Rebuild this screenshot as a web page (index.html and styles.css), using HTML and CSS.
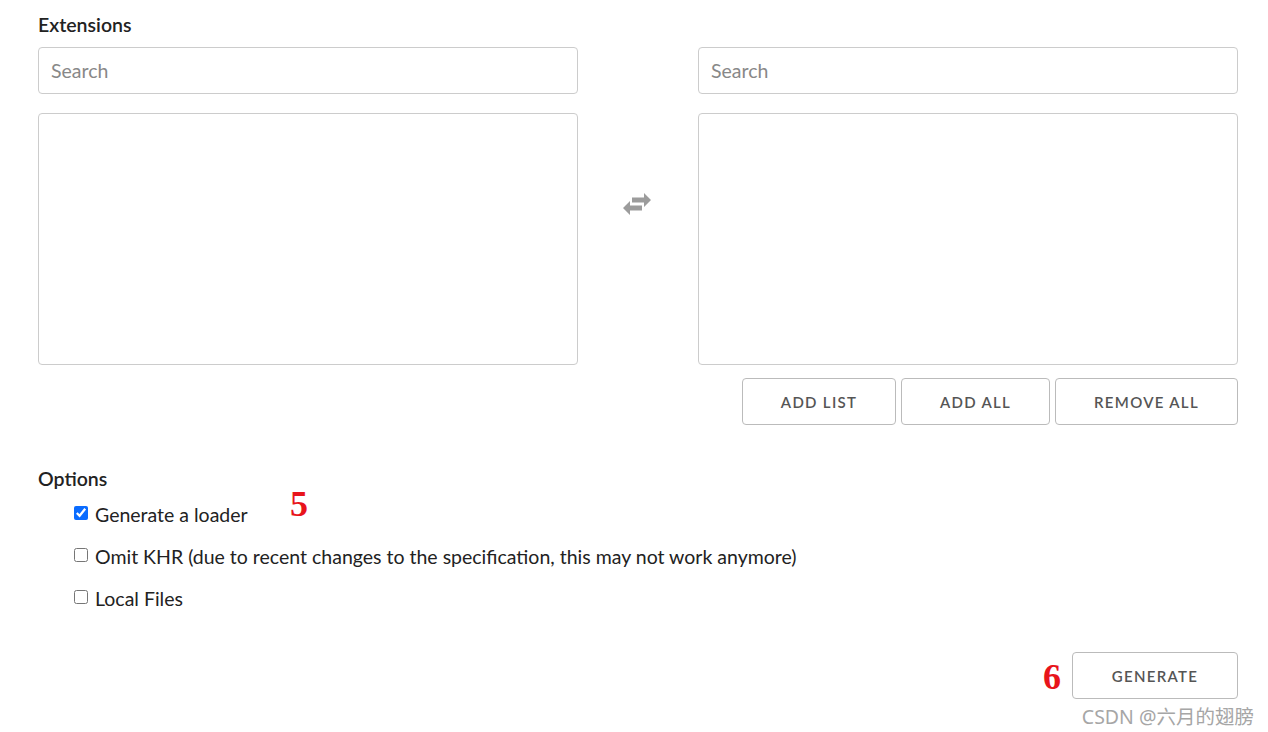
FILE: index.html
```html
<!DOCTYPE html>
<html lang="en">
<head>
    <meta charset="UTF-8">
    <title>Extensions</title>
    <link rel="stylesheet" href="styles.css">
</head>
<body>
    <div class="container">
        <h3 class="section-title">Extensions</h3>
        <div class="picker">
            <div class="column">
                <input type="text" class="search" placeholder="Search">
                <div class="list-box"></div>
            </div>
            <div class="swap">
                <svg width="28" height="22" viewBox="0 0 28 22">
                    <path d="M9 4.5h12V0l7 7-7 7V9.5H9z" fill="#9c9c9c"/>
                    <path d="M19 12.5H7V8l-7 7 7 7v-4.5h12z" fill="#9c9c9c"/>
                </svg>
            </div>
            <div class="column">
                <input type="text" class="search" placeholder="Search">
                <div class="list-box"></div>
                <div class="list-actions">
                    <button class="btn btn-list">ADD LIST</button>
                    <button class="btn btn-all">ADD ALL</button>
                    <button class="btn btn-remove">REMOVE ALL</button>
                </div>
            </div>
        </div>

        <h3 class="section-title options-title">Options</h3>
        <div class="options">
            <label class="option">
                <input type="checkbox" checked>
                <span>Generate a loader</span>
                <span class="mark mark-5">5</span>
            </label>
            <label class="option">
                <input type="checkbox">
                <span>Omit KHR (due to recent changes to the specification, this may not work anymore)</span>
            </label>
            <label class="option">
                <input type="checkbox">
                <span>Local Files</span>
            </label>
        </div>

        <div class="footer">
            <span class="mark mark-6">6</span>
            <button class="btn btn-generate">GENERATE</button>
        </div>
    </div>
    <div class="watermark">CSDN @六月的翅膀</div>
</body>
</html>
```

FILE: styles.css
```css
* {
    margin: 0;
    padding: 0;
    box-sizing: border-box;
}

body {
    background: #fff;
    color: #222;
    font-family: 'Lato', 'Open Sans', sans-serif;
    padding: 13px 0 0 38px;
    position: relative;
    height: 732px;
    overflow: hidden;
}

.container {
    width: 1200px;
}

.section-title {
    font-size: 19.5px;
    font-weight: 600;
    color: #222;
    line-height: 24px;
    margin-bottom: 10px;
}

.picker {
    display: grid;
    grid-template-columns: 540px 120px 540px;
}

.column {
    display: flex;
    flex-direction: column;
}

.search {
    height: 47px;
    border: 1px solid #ccc;
    border-radius: 4px;
    padding: 0 12px;
    font-family: inherit;
    font-size: 19.5px;
    color: #333;
    outline: none;
}

.search::placeholder {
    color: #888;
}

.list-box {
    height: 252px;
    margin-top: 19px;
    border: 1px solid #ccc;
    border-radius: 4px;
}

.swap {
    display: flex;
    justify-content: center;
    padding: 146px 2px 0 0;
}

.list-actions {
    display: flex;
    justify-content: flex-end;
    gap: 5px;
    margin-top: 13px;
}

.btn {
    height: 47px;
    background: #fff;
    border: 1px solid #bbb;
    border-radius: 4px;
    font-family: inherit;
    font-size: 15px;
    font-weight: 600;
    letter-spacing: 1.3px;
    color: #555;
    cursor: pointer;
}

.btn-list { width: 154px; }
.btn-all { width: 149px; }
.btn-remove { width: 183px; }

.options-title {
    margin-top: 42px;
    margin-bottom: 2px;
}

.options {
    padding-left: 36px;
    display: flex;
    flex-direction: column;
}

.option {
    display: flex;
    align-items: center;
    height: 42px;
    font-size: 19.5px;
    color: #222;
    position: relative;
}

.option input {
    width: 14px;
    height: 14px;
    margin: 0 7px 2px 0;
    accent-color: #0a6cff;
}

.mark {
    font-family: 'Liberation Serif', serif;
    font-weight: bold;
    color: #e8141b;
    font-size: 36px;
    line-height: 1;
}

.mark-5 {
    position: absolute;
    left: 216px;
    top: -7px;
}

.footer {
    display: flex;
    justify-content: flex-end;
    align-items: center;
    gap: 11px;
    margin-top: 33px;
}

.mark-6 {
    padding-top: 2px;
}

.btn-generate {
    width: 166px;
}

.watermark {
    position: absolute;
    right: 14px;
    top: 701px;
    font-family: 'Noto Sans', 'Noto Sans CJK SC', sans-serif;
    font-size: 19.5px;
    color: #a6a6a6;
}
```
